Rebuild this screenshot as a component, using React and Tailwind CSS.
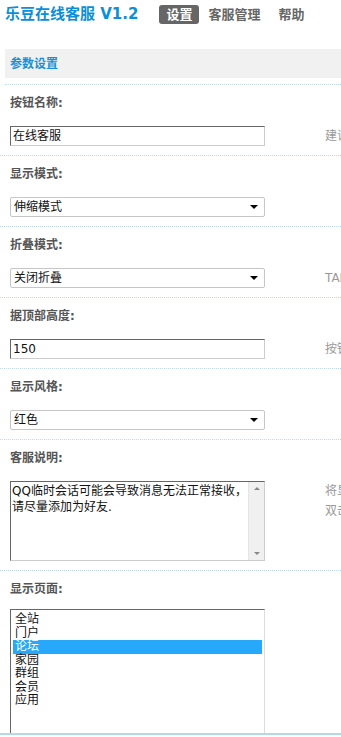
const font = "font-['DejaVu_Sans','Noto_Sans_CJK_SC',sans-serif]";

function Row({ label, hint, children, last }) {
  return (
    <div
      className={
        last
          ? "pl-[5px] pt-[10px]"
          : "border-b border-dotted border-[#b9dcf0] pl-[5px] pt-[10px] pb-[9px]"
      }
    >
      <div className="h-4 pl-[5px] text-[12px] font-bold leading-4 text-[#555]">{label}</div>
      <div className={last ? "mt-[12px] flex items-start pl-[5px]" : "mt-[15px] flex items-start pl-[5px]"}>
        <div className="w-[255px] shrink-0">{children}</div>
        <div className="ml-[60px] whitespace-nowrap text-[12px] leading-5 text-[#999]">{hint}</div>
      </div>
    </div>
  );
}

function TextInput({ value }) {
  return (
    <div className="h-5 w-[255px] border border-t-[#666] border-l-[#666] border-b-[#ccc] border-r-[#ccc] bg-white pl-[2px] text-[12px] leading-[18px] text-[#111]">
      {value}
    </div>
  );
}

function Select({ value }) {
  return (
    <div className="relative h-5 w-[255px] rounded-[2px] border border-[#c6c6c6] bg-white pl-[3px] text-[12px] leading-[18px] text-[#111]">
      {value}
      <span className="absolute right-[6px] top-[7px] h-0 w-0 border-x-[4px] border-t-[4px] border-x-transparent border-t-black" />
    </div>
  );
}

function Textarea({ value }) {
  return (
    <div className="flex h-20 w-[255px] border border-t-[#666] border-l-[#666] border-b-[#ccc] border-r-[#ccc] bg-white">
      <div className="flex-1 pl-[1px] pt-[1px] text-[12px] leading-4 text-[#111]">{value}</div>
      <div className="flex w-[16px] flex-col items-center justify-between border-l border-[#e4e4e4] bg-[#f0f0f0] py-[5px]">
        <span className="h-0 w-0 border-x-[3px] border-b-[3px] border-x-transparent border-b-[#888]" />
        <span className="h-0 w-0 border-x-[3px] border-t-[3px] border-x-transparent border-t-[#888]" />
      </div>
    </div>
  );
}

function ListBox({ items, selected }) {
  return (
    <div className="h-[124px] w-[255px] border-l border-t border-r border-l-[#666] border-t-[#666] border-r-[#ddd] bg-white px-[2px] pt-[3px]">
      {items.map((it) => (
        <div
          key={it}
          className={
            it === selected
              ? "bg-[#28a8fb] pl-[2px] text-[12px] leading-[13.5px] text-white"
              : "pl-[2px] text-[12px] leading-[13.5px] text-[#111]"
          }
        >
          {it}
        </div>
      ))}
    </div>
  );
}

export default function App() {
  return (
    <div className={`w-[341px] overflow-hidden bg-white ${font}`}>
      <div className="flex h-[49px] items-start pl-[5px] pt-[5px]">
        <div className="text-[15px] font-bold leading-[19px] text-[#0b8fd8]">乐豆在线客服 V1.2</div>
        <div className="ml-[21px] flex h-[19px] w-[40px] items-center justify-center rounded-[3px] bg-[#666] text-[13px] font-bold text-white">
          设置
        </div>
        <div className="ml-[9px] text-[13px] font-bold leading-[19px] text-[#666]">客服管理</div>
        <div className="ml-[18px] text-[13px] font-bold leading-[19px] text-[#666]">帮助</div>
      </div>

      <div className="pl-[5px]">
        <div className="flex h-[29px] items-center bg-[#f1f1f1] pl-[5px] text-[12px] font-bold text-[#1a8fd6]">
          参数设置
        </div>
        <div className="h-[7px] border-b border-dotted border-[#b9dcf0]" />
      </div>

      <Row label="按钮名称:" hint="建议不超过四个字">
        <TextInput value="在线客服" />
      </Row>
      <Row label="显示模式:">
        <Select value="伸缩模式" />
      </Row>
      <Row label="折叠模式:" hint="TAB折叠">
        <Select value="关闭折叠" />
      </Row>
      <Row label="据顶部高度:" hint="按钮距离顶部">
        <TextInput value="150" />
      </Row>
      <Row label="显示风格:">
        <Select value="红色" />
      </Row>
      <Row
        label="客服说明:"
        hint={
          <>
            将显示在客服
            <br />
            双击可编辑
          </>
        }
      >
        <Textarea value="QQ临时会话可能会导致消息无法正常接收，请尽量添加为好友." />
      </Row>
      <Row label="显示页面:" last>
        <ListBox items={["全站", "门户", "论坛", "家园", "群组", "会员", "应用"]} selected="论坛" />
      </Row>
      <div className="h-[2px] bg-[#b3d7f1]" />
    </div>
  );
}
